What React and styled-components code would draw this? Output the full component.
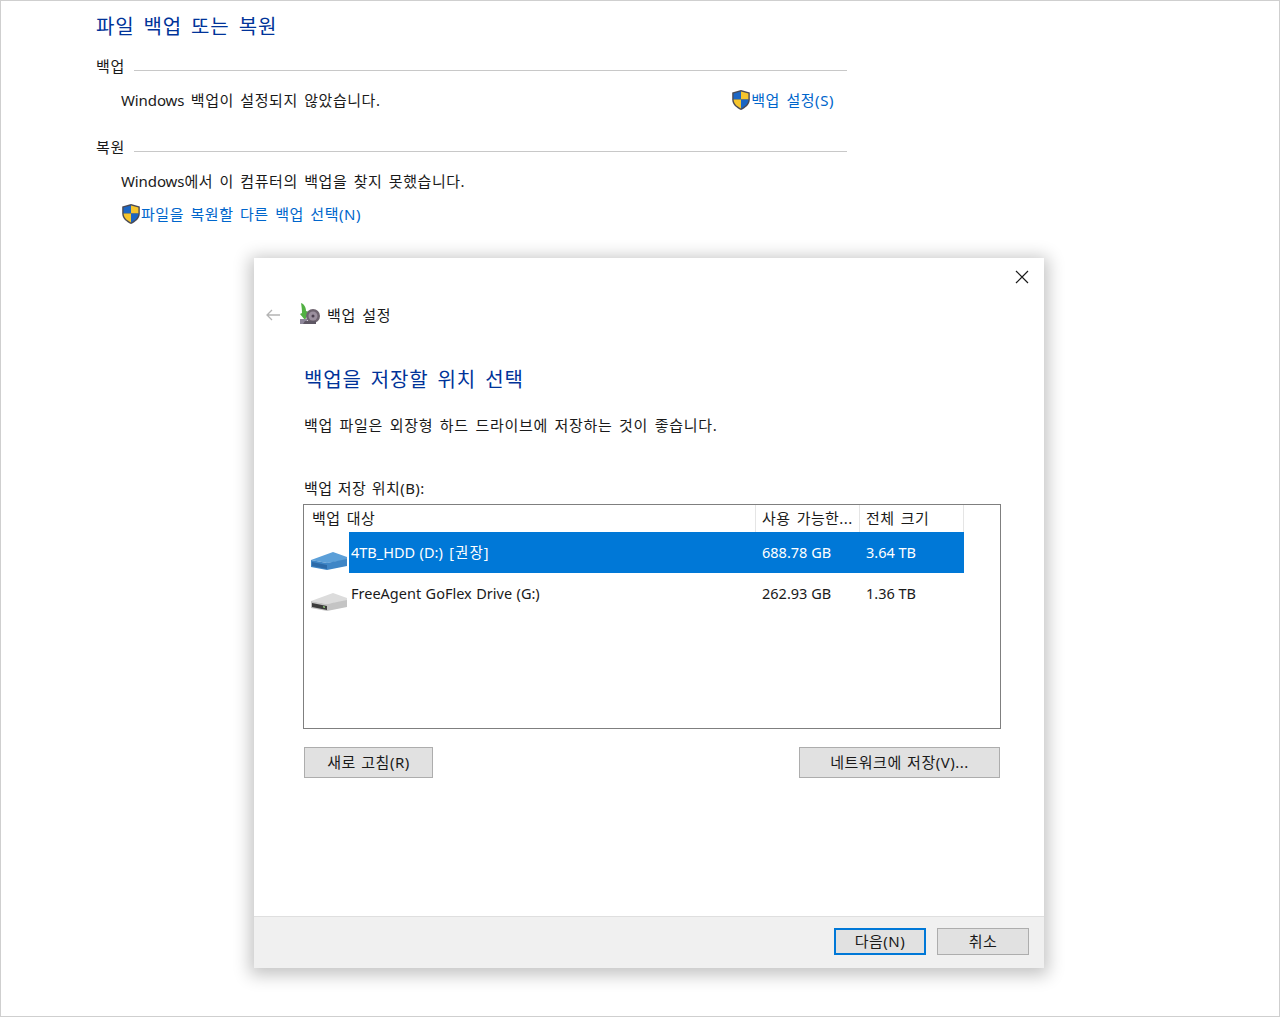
import styled, { createGlobalStyle } from 'styled-components';

const GlobalStyle = createGlobalStyle`
  html, body {
    margin: 0;
    padding: 0;
    background: #fff;
  }
  body {
    font-family: "Noto Sans", "Noto Sans CJK KR", sans-serif;
    font-size: 15px;
    color: #1a1a1a;
  }
`;

const Page = styled.div`
  box-sizing: border-box;
  width: 1280px;
  height: 1017px;
  border: 1px solid #cfcfcf;
  padding: 12px 0 0 95px;
  overflow: hidden;
`;

const Panel = styled.section`
  width: 751px;
`;

const PanelTitle = styled.h1`
  margin: 0;
  height: 27px;
  font-size: 20px;
  line-height: 27px;
  font-weight: 400;
  color: #003399;
  letter-spacing: 0.85px;
  word-spacing: 3px;
`;

const GroupHead = styled.div`
  display: flex;
  align-items: center;
  gap: 9px;
  height: 20px;
  margin-top: ${(p) => p.$top}px;
  font-size: 15px;
  line-height: 20px;
  letter-spacing: 0.6px;
`;

const GroupRule = styled.div`
  flex: 1;
  height: 1px;
  margin-top: 8px;
  background: #c8c8c8;
`;

const GroupRow = styled.div`
  display: flex;
  align-items: center;
  justify-content: space-between;
  height: 20px;
  margin-top: ${(p) => p.$top}px;
  padding: 0 13px 0 25px;
  font-size: 15px;
  line-height: 20px;
  letter-spacing: 0.55px;
  word-spacing: 2px;
`;

const Latin = styled.span`
  letter-spacing: -0.1px;
`;

const ShieldLink = styled.div`
  display: flex;
  align-items: center;
  color: #0066cc;
  font-size: 15px;
  letter-spacing: 0.55px;
  word-spacing: 2px;
`;

const Dialog = styled.div`
  display: flex;
  flex-direction: column;
  box-sizing: border-box;
  width: 790px;
  height: 710px;
  margin: 34px 0 0 158px;
  background: #fff;
  box-shadow: 0 3px 16px 4px rgba(0, 0, 0, 0.24);
`;

const CloseRow = styled.div`
  display: flex;
  justify-content: flex-end;
  height: 38px;
  padding: 12px 15px 0 0;
  box-sizing: border-box;
`;

const NavRow = styled.div`
  display: flex;
  align-items: center;
  height: 20px;
  margin-top: 8px;
  padding-left: 11px;
  font-size: 15px;
  letter-spacing: 0.6px;
  word-spacing: 2px;
`;

const BackIcon = styled.svg`
  width: 16px;
  height: 12px;
  margin: 1px 18px 0 0;
`;

const DialogBody = styled.div`
  flex: 1;
  padding: 0 44px 0 50px;
`;

const Heading = styled.h2`
  margin: 42px 0 0;
  height: 28px;
  font-size: 20px;
  line-height: 28px;
  font-weight: 400;
  color: #003399;
  letter-spacing: 0.85px;
  word-spacing: 3px;
`;

const Lead = styled.p`
  margin: 21px 0 0;
  height: 20px;
  font-size: 15px;
  line-height: 20px;
  letter-spacing: 0.7px;
  word-spacing: 2px;
`;

const ListLabel = styled.div`
  margin-top: 43px;
  height: 20px;
  font-size: 15px;
  line-height: 20px;
  letter-spacing: 0.45px;
  word-spacing: 1px;
`;

const ListBox = styled.div`
  box-sizing: border-box;
  width: 698px;
  height: 225px;
  margin: 6px 0 0 -1px;
  border: 1px solid #7f7f7f;
  padding-right: 35px;
`;

const ListHeader = styled.div`
  display: grid;
  grid-template-columns: 452px 104px 104px;
  height: 27px;
  line-height: 26px;
  font-size: 15px;
  letter-spacing: 0.4px;
  word-spacing: 2px;
`;

const HeaderCell = styled.div`
  padding-left: ${(p) => p.$pad}px;
  border-right: 1px solid #e5e5e5;
  white-space: nowrap;
  overflow: hidden;
`;

const ListRow = styled.div`
  display: grid;
  grid-template-columns: 45px 407px 104px 104px;
  height: 41px;
  font-size: 14.5px;
  line-height: 40px;
`;

const DriveCell = styled.div`
  display: flex;
  align-items: flex-end;
  padding: 0 0 2px 6px;
`;

const NameCell = styled.div`
  padding-left: 2px;
  white-space: nowrap;
  word-spacing: 0.7px;
  background: ${(p) => (p.$selected ? '#0078d7' : 'transparent')};
  color: ${(p) => (p.$selected ? '#fff' : 'inherit')};
`;

const Tag = styled.span`
  margin-left: 1px;
  letter-spacing: 1px;
`;

const ValueCell = styled.div`
  padding-left: ${(p) => p.$pad}px;
  background: ${(p) => (p.$selected ? '#0078d7' : 'transparent')};
  color: ${(p) => (p.$selected ? '#fff' : 'inherit')};
`;

const ButtonRow = styled.div`
  display: flex;
  justify-content: space-between;
  width: 696px;
  margin-top: 18px;
`;

const Button = styled.button`
  box-sizing: border-box;
  width: ${(p) => p.$width}px;
  height: ${(p) => p.$height || 31}px;
  padding: 0 0 2px;
  border: ${(p) => (p.$primary ? '2px solid #0078d7' : '1px solid #adadad')};
  background: #e1e1e1;
  color: #1a1a1a;
  font-family: inherit;
  font-size: 15px;
  letter-spacing: 0.5px;
  word-spacing: 1px;
`;

const Footer = styled.div`
  display: flex;
  align-items: flex-start;
  justify-content: flex-end;
  gap: 11px;
  box-sizing: border-box;
  height: 52px;
  padding: 11px 15px 0 0;
  border-top: 1px solid #dfdfdf;
  background: #f0f0f0;
`;

function Shield() {
  return (
    <svg width="20" height="22" viewBox="0 0 20 22" style={{ flexShrink: 0 }}>
      <path d="M10 1 L18.8 3.5 V10.5 C18.8 15.5 14.5 19 10 21 C5.5 19 1.2 15.5 1.2 10.5 V3.5 Z" fill="#4a4a55" />
      <path d="M10 2.5 V10.5 H2.6 V4.5 Z" fill="#1c66c4" />
      <path d="M10 2.5 L17.4 4.5 V10.5 H10 Z" fill="#f6c52c" />
      <path d="M2.6 10.5 H10 V19.4 C6.2 17.6 2.8 14.8 2.6 10.5 Z" fill="#f6c52c" />
      <path d="M10 10.5 H17.4 C17.2 14.8 13.8 17.6 10 19.4 Z" fill="#1c66c4" />
    </svg>
  );
}

function BackupIcon() {
  return (
    <svg width="22" height="22" viewBox="0 0 22 22" style={{ marginRight: 6 }}>
      <path d="M2 0 C5 1 7 4 7 8 L10 9 L6 17 L1 11 L3 10 C3 6 2.5 3 2 0 Z" fill="#52b043" />
      <path d="M1 16 H8 V21 H1 Z" fill="#8d8699" />
      <circle cx="14" cy="13" r="7" fill="#6f6470" />
      <circle cx="14" cy="13" r="4.5" fill="#9b8f9e" />
      <circle cx="14" cy="13" r="1.5" fill="#4b3f4f" />
      <path d="M6 18 H17 V21 H4 Z" fill="#5e5764" />
    </svg>
  );
}

function DriveIcon({ top, side, front, led }) {
  return (
    <svg width="38" height="20" viewBox="0 0 38 20">
      <path d="M1 9 L23 1 L37 6 L37 9 L17 12 Z" fill={top} />
      <path d="M1 9 L17 12 L37 8 V15 L17 19 L1 16 Z" fill={side} />
      <path d="M2 11 L17 14 V18 L2 15 Z" fill={front} />
      <path d="M13 14 L15 14.5 V16 L13 15.5 Z" fill={led} />
    </svg>
  );
}

function CloseIcon() {
  return (
    <svg width="14" height="14" viewBox="0 0 14 14">
      <path d="M1 1 L13 13 M13 1 L1 13" stroke="#1a1a1a" strokeWidth="1.2" fill="none" />
    </svg>
  );
}

const drives = [
  {
    name: '4TB_HDD (D:)',
    tag: '[권장]',
    free: '688.78 GB',
    total: '3.64 TB',
    selected: true,
    colors: { top: '#5b9fd8', side: '#3f86c6', front: '#2c6aa8', led: '#2c6aa8' },
  },
  {
    name: 'FreeAgent GoFlex Drive (G:)',
    free: '262.93 GB',
    total: '1.36 TB',
    selected: false,
    colors: { top: '#dcdcdc', side: '#c4c4c4', front: '#3c3c3c', led: '#8fc87a' },
  },
];

export default function App() {
  return (
    <Page>
      <GlobalStyle />
      <Panel>
        <PanelTitle>파일 백업 또는 복원</PanelTitle>
        <GroupHead $top={16}>
          백업
          <GroupRule />
        </GroupHead>
        <GroupRow $top={14}>
          <span><Latin>Windows</Latin> 백업이 설정되지 않았습니다.</span>
          <ShieldLink>
            <Shield />
            백업 설정(S)
          </ShieldLink>
        </GroupRow>
        <GroupHead $top={27}>
          복원
          <GroupRule />
        </GroupHead>
        <GroupRow $top={14}>
          <span><Latin>Windows</Latin>에서 이 컴퓨터의 백업을 찾지 못했습니다.</span>
        </GroupRow>
        <GroupRow $top={13}>
          <ShieldLink>
            <Shield />
            파일을 복원할 다른 백업 선택(N)
          </ShieldLink>
        </GroupRow>
      </Panel>
      <Dialog>
        <CloseRow>
          <CloseIcon />
        </CloseRow>
        <NavRow>
          <BackIcon viewBox="0 0 16 12">
            <path d="M15 6 H2 M7 1 L2 6 L7 11" stroke="#b4b4b4" strokeWidth="1.3" fill="none" />
          </BackIcon>
          <BackupIcon />
          백업 설정
        </NavRow>
        <DialogBody>
          <Heading>백업을 저장할 위치 선택</Heading>
          <Lead>백업 파일은 외장형 하드 드라이브에 저장하는 것이 좋습니다.</Lead>
          <ListLabel>백업 저장 위치(B):</ListLabel>
          <ListBox>
            <ListHeader>
              <HeaderCell $pad={8}>백업 대상</HeaderCell>
              <HeaderCell $pad={6}>사용 가능한...</HeaderCell>
              <HeaderCell $pad={6}>전체 크기</HeaderCell>
            </ListHeader>
            {drives.map((d) => (
              <ListRow key={d.name}>
                <DriveCell>
                  <DriveIcon {...d.colors} />
                </DriveCell>
                <NameCell $selected={d.selected}>
                  {d.name}
                  {d.tag && <Tag> {d.tag}</Tag>}
                </NameCell>
                <ValueCell $selected={d.selected} $pad={6}>{d.free}</ValueCell>
                <ValueCell $selected={d.selected} $pad={6}>{d.total}</ValueCell>
              </ListRow>
            ))}
          </ListBox>
          <ButtonRow>
            <Button $width={129}>새로 고침(R)</Button>
            <Button $width={201}>네트워크에 저장(V)...</Button>
          </ButtonRow>
        </DialogBody>
        <Footer>
          <Button $width={92} $height={27} $primary>다음(N)</Button>
          <Button $width={92} $height={27}>취소</Button>
        </Footer>
      </Dialog>
    </Page>
  );
}
